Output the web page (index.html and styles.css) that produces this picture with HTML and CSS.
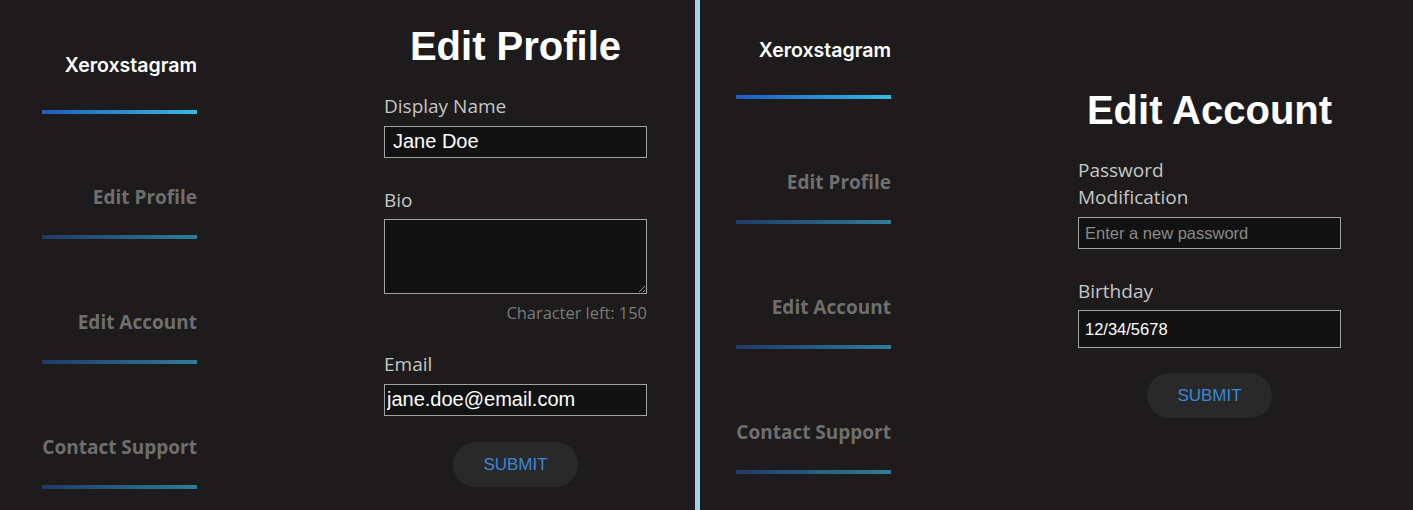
FILE: index.html
```html
<!DOCTYPE html>
<html lang="en">
<head>
<meta charset="utf-8">
<title>Xeroxstagram – Settings</title>
<link rel="stylesheet" href="styles.css">
</head>
<body>
<div class="app">
  <section class="panel panel--profile">
    <nav class="sidebar">
      <div class="nav-item nav-item--brand">
        <span class="nav-text">Xeroxstagram</span>
        <span class="nav-bar"></span>
      </div>
      <div class="nav-item">
        <span class="nav-text">Edit Profile</span>
        <span class="nav-bar"></span>
      </div>
      <div class="nav-item">
        <span class="nav-text">Edit Account</span>
        <span class="nav-bar"></span>
      </div>
      <div class="nav-item">
        <span class="nav-text">Contact Support</span>
        <span class="nav-bar"></span>
      </div>
    </nav>
    <form class="form">
      <h1 class="form-title">Edit Profile</h1>
      <div class="field">
        <label class="field-label" for="dn">Display Name</label>
        <input class="field-input field-input--lg" id="dn" type="text" value="Jane Doe">
      </div>
      <div class="field">
        <label class="field-label field-label--tight" for="bio">Bio</label>
        <textarea class="field-area" id="bio"></textarea>
        <div class="counter">Character left: 150</div>
      </div>
      <div class="field field--after-counter">
        <label class="field-label" for="em">Email</label>
        <input class="field-input field-input--lg field-input--snug" id="em" type="text" value="jane.doe@email.com">
      </div>
      <button class="submit" type="button">SUBMIT</button>
    </form>
  </section>
  <div class="divider"></div>
  <section class="panel panel--account">
    <nav class="sidebar">
      <div class="nav-item nav-item--brand">
        <span class="nav-text">Xeroxstagram</span>
        <span class="nav-bar"></span>
      </div>
      <div class="nav-item">
        <span class="nav-text">Edit Profile</span>
        <span class="nav-bar"></span>
      </div>
      <div class="nav-item">
        <span class="nav-text">Edit Account</span>
        <span class="nav-bar"></span>
      </div>
      <div class="nav-item">
        <span class="nav-text">Contact Support</span>
        <span class="nav-bar"></span>
      </div>
    </nav>
    <form class="form">
      <h1 class="form-title">Edit Account</h1>
      <div class="field">
        <label class="field-label field-label--narrow" for="pw">Password Modification</label>
        <input class="field-input field-input--sm" id="pw" type="password" placeholder="Enter a new password">
      </div>
      <div class="field">
        <label class="field-label field-label--tight" for="bd">Birthday</label>
        <input class="field-input field-input--sm field-input--tall" id="bd" type="text" value="12/34/5678">
      </div>
      <button class="submit submit--account" type="button">SUBMIT</button>
    </form>
  </section>
</div>
</body>
</html>
```

FILE: styles.css
```css
* { box-sizing: border-box; }

html, body {
  margin: 0;
  padding: 0;
  background: #1d1b1c;
}

body {
  font-family: "Open Sans", "Noto Sans", sans-serif;
  color: #c8c8c8;
}

.app {
  display: flex;
  height: 510px;
  overflow: hidden;
  background: #1d1b1c;
}

.panel {
  display: flex;
  align-items: flex-start;
}

.panel--profile {
  width: 695px;
  padding-left: 42px;
}

.panel--account {
  flex: 1;
  padding-left: 36px;
}

.divider {
  width: 5px;
  flex: none;
  background: #9dd6ea;
}

/* sidebar */
.sidebar {
  width: 155px;
  flex: none;
  display: flex;
  flex-direction: column;
  padding-top: 52px;
}

.panel--account .sidebar {
  padding-top: 37px;
}

.nav-item {
  display: flex;
  flex-direction: column;
  margin-top: 70px;
}

.nav-item--brand {
  margin-top: 0;
}

.nav-text {
  display: block;
  text-align: right;
  white-space: nowrap;
  font-family: "Open Sans", "Noto Sans", sans-serif;
  font-weight: 700;
  font-size: 19px;
  line-height: 26px;
  color: #6f6f6f;
}

.nav-item--brand .nav-text {
  font-family: Inter, "Open Sans", sans-serif;
  font-weight: 600;
  font-size: 19.5px;
  color: #ffffff;
}

.nav-bar {
  display: block;
  height: 4px;
  margin-top: 25px;
  background: linear-gradient(90deg, #1f3a6b, #2e7e98);
}

.nav-item--brand .nav-bar {
  margin-top: 32px;
  background: linear-gradient(90deg, #1e5cc0, #3ab8e2);
}

/* form */
.form {
  width: 263px;
  flex: none;
  margin-left: 187px;
  display: flex;
  flex-direction: column;
  padding-top: 22px;
}

.panel--account .form {
  padding-top: 86px;
}

.form-title {
  margin: 0 0 23px;
  font-family: "Liberation Sans", Arial, sans-serif;
  font-weight: 700;
  font-size: 40px;
  line-height: 48px;
  color: #ffffff;
  text-align: center;
  white-space: nowrap;
}

.field {
  display: flex;
  flex-direction: column;
}

.field + .field {
  margin-top: 29px;
}

.field--after-counter.field {
  margin-top: 28px;
}

.field-label {
  display: block;
  font-size: 19px;
  line-height: 27px;
  color: #c6c6c6;
  margin-bottom: 6px;
}

.field-label--tight {
  margin-bottom: 5px;
}

.field-label--narrow {
  width: 125px;
}

.field-input,
.field-area {
  width: 263px;
  margin: 0;
  border: 1px solid #a2a2a2;
  border-radius: 0;
  background: #131213;
  color: #ffffff;
  font-family: "Liberation Sans", Arial, sans-serif;
  outline: none;
}

.field-input--lg {
  height: 32px;
  padding: 0 8px 1px;
  font-size: 20px;
}

.field-input--snug {
  padding: 0 2px 1px;
}

.field-input--sm {
  height: 32px;
  padding: 0 6px;
  font-size: 16.5px;
}

.field-input--tall {
  height: 38px;
}

.field-input::placeholder {
  color: #8a8a8a;
  opacity: 1;
}

.field-area {
  height: 75px;
  padding: 2px 8px;
  font-size: 16px;
  resize: both;
}

.counter {
  margin-top: 8px;
  text-align: right;
  font-size: 16.4px;
  line-height: 21px;
  color: #7a7a7a;
}

.submit {
  align-self: center;
  width: 125px;
  height: 45px;
  margin-top: 26px;
  border: none;
  border-radius: 23px;
  background: #29292a;
  color: #3a88d9;
  font-family: "Liberation Sans", Arial, sans-serif;
  font-size: 17px;
  cursor: pointer;
}

.submit--account {
  margin-top: 25px;
}
```
